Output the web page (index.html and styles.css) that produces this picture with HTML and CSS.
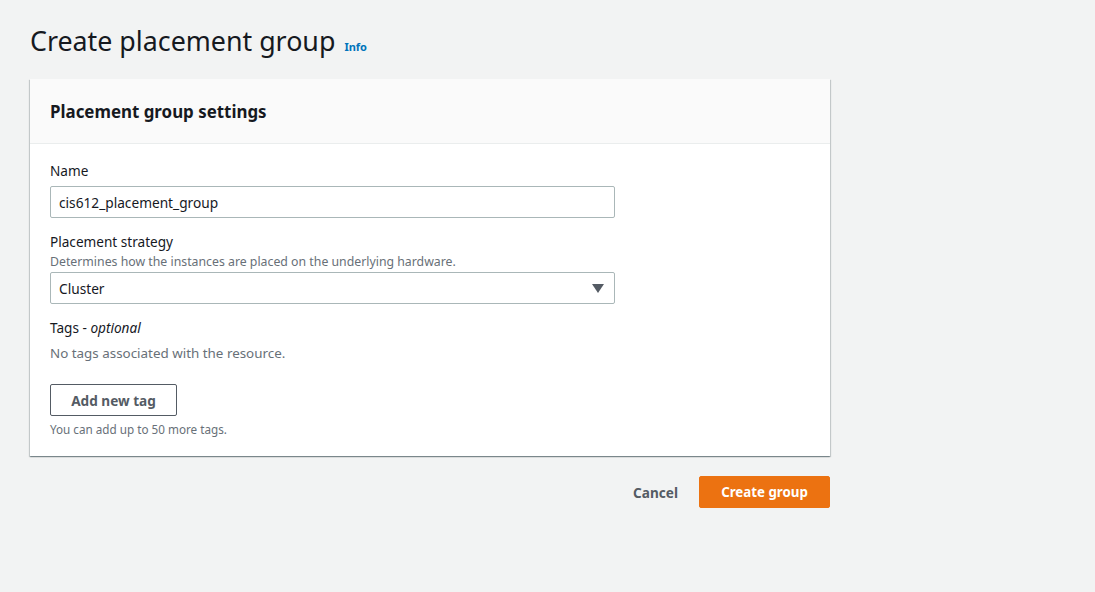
FILE: index.html
```html
<!DOCTYPE html>
<html>
<head>
<meta charset="utf-8">
<link rel="stylesheet" href="styles.css">
</head>
<body>
<div class="page">
  <div class="title-row">
    <h1 class="title">Create placement group</h1>
    <a class="info">Info</a>
  </div>
  <div class="card">
    <div class="card-header"><h2>Placement group settings</h2></div>
    <div class="card-body">
      <div class="field">
        <div class="label">Name</div>
        <div class="input">cis612_placement_group</div>
      </div>
      <div class="field">
        <div class="label">Placement strategy</div>
        <div class="desc">Determines how the instances are placed on the underlying hardware.</div>
        <div class="input select"><span>Cluster</span>
          <svg class="caret" width="12" height="9" viewBox="0 0 12 9"><path d="M0 0H12L6 9Z" fill="#545b64"/></svg>
        </div>
      </div>
      <div class="field tags">
        <div class="label">Tags - <i>optional</i></div>
        <div class="empty">No tags associated with the resource.</div>
        <button class="btn-normal">Add new tag</button>
        <div class="hint">You can add up to 50 more tags.</div>
      </div>
    </div>
  </div>
  <div class="actions">
    <a class="cancel">Cancel</a>
    <button class="btn-primary">Create group</button>
  </div>
</div>
</body>
</html>
```
FILE: styles.css
```css
html, body {
  margin: 0;
  padding: 0;
  background: #f2f3f3;
  font-family: "Noto Sans", "Open Sans", sans-serif;
  color: #16191f;
}
.page {
  width: 800px;
  padding: 21px 0 0 30px;
}
.title-row {
  display: flex;
  align-items: baseline;
  gap: 9px;
  height: 43px;
}
.title {
  margin: 0;
  font-size: 26.8px;
  font-weight: 400;
  line-height: 40px;
}
.info {
  font-size: 11px;
  font-weight: 700;
  color: #0073bb;
}
.card {
  margin-top: 15px;
  background: #fff;
  box-shadow: 0 1px 1px 0 rgba(0,28,36,.3), 1px 1px 1px 0 rgba(0,28,36,.15), -1px 1px 1px 0 rgba(0,28,36,.15);
}
.card-header {
  background: #fafafa;
  border-bottom: 1px solid #eaeded;
  height: 64px;
  display: flex;
  align-items: center;
  padding: 0 20px;
}
.card-header h2 {
  margin: 0;
  font-size: 16.9px;
  font-weight: 700;
}
.card-body {
  padding: 17px 20px 19px;
}
.field {
  width: 565px;
  margin-bottom: 14px;
}
.label {
  font-size: 13.6px;
  line-height: 20px;
  margin-bottom: 5px;
}
.label i { font-style: italic; }
.desc {
  font-size: 12.3px;
  color: #687078;
  line-height: 16px;
  margin-top: -3px;
  margin-bottom: 2px;
}
.input {
  box-sizing: border-box;
  height: 32px;
  border: 1px solid #aab7b8;
  border-radius: 2px;
  padding: 0 8px;
  font-size: 13.7px;
  display: flex;
  align-items: center;
}
.select {
  justify-content: space-between;
  padding-right: 10px;
}
.empty {
  font-size: 13.4px;
  color: #687078;
  line-height: 20px;
  margin-top: 3px;
}
.btn-normal {
  margin-top: 21px;
  box-sizing: border-box;
  height: 32px;
  width: 127px;
  padding: 0;
  background: #fff;
  border: 1px solid #545b64;
  border-radius: 2px;
  font-family: inherit;
  font-size: 13.6px;
  font-weight: 700;
  color: #545b64;
}
.hint {
  font-size: 11.7px;
  color: #687078;
  line-height: 16px;
  margin-top: 5px;
}
.tags { margin-bottom: 0; }
.actions {
  display: flex;
  justify-content: flex-end;
  align-items: center;
  gap: 21px;
  margin-top: 20px;
}
.cancel {
  font-size: 13.6px;
  font-weight: 700;
  color: #545b64;
}
.btn-primary {
  box-sizing: border-box;
  height: 32px;
  width: 131px;
  padding: 0;
  background: #ec7211;
  border: 1px solid #ec7211;
  border-radius: 2px;
  font-family: inherit;
  font-size: 13.3px;
  font-weight: 700;
  color: #fff;
}
```
